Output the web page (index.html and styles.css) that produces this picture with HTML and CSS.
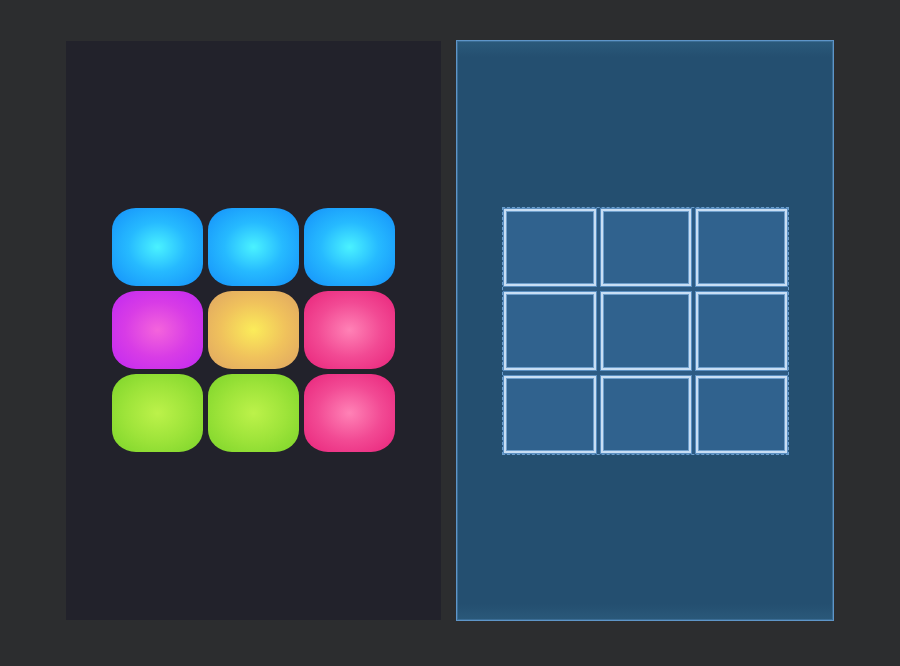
FILE: index.html
```html
<!DOCTYPE html>
<html>
<head>
<meta charset="utf-8">
<link rel="stylesheet" href="styles.css">
</head>
<body>
<div class="stage">
  <div class="panel device">
    <div class="pads">
      <div class="pad blue"></div>
      <div class="pad blue"></div>
      <div class="pad blue"></div>
      <div class="pad purple"></div>
      <div class="pad orange"></div>
      <div class="pad pink"></div>
      <div class="pad green"></div>
      <div class="pad green"></div>
      <div class="pad pink"></div>
    </div>
  </div>
  <div class="panel blueprint">
    <div class="layout">
      <div class="cell"></div>
      <div class="cell"></div>
      <div class="cell"></div>
      <div class="cell"></div>
      <div class="cell"></div>
      <div class="cell"></div>
      <div class="cell"></div>
      <div class="cell"></div>
      <div class="cell"></div>
    </div>
  </div>
</div>
</body>
</html>
```
FILE: styles.css
```css
html, body {
  margin: 0;
  padding: 0;
  background: #2c2d2f;
  font-family: "Liberation Sans", sans-serif;
}
.stage {
  width: 900px;
  height: 666px;
  display: flex;
  align-items: flex-start;
  padding: 40px 0 0 66px;
  box-sizing: border-box;
  gap: 15px;
}
.panel {
  display: flex;
  align-items: center;
  justify-content: center;
  box-sizing: border-box;
}
.device {
  width: 375px;
  height: 579px;
  background: #22222b;
  margin-top: 1px;
  padding-bottom: 2px;
}
.pads {
  display: grid;
  grid-template-columns: repeat(3, 91px);
  grid-template-rows: repeat(3, 78px);
  gap: 5px;
}
.pad {
  border-radius: 24px / 22px;
}
.blue { background: radial-gradient(ellipse at center, #4af2ff 0%, #26baff 45%, #148ffa 100%); }
.purple { background: radial-gradient(ellipse at center, #f464dc 0%, #d83ce6 50%, #c028f2 100%); }
.orange { background: radial-gradient(ellipse at center, #fbec5a 0%, #f0c25c 50%, #dea462 100%); }
.pink { background: radial-gradient(ellipse at center, #ff82b6 0%, #f24a94 50%, #e8237a 100%); }
.green { background: radial-gradient(ellipse at center, #bcf24a 0%, #9ee43a 50%, #7cd42a 100%); }

.blueprint {
  width: 378px;
  height: 581px;
  background: linear-gradient(to bottom, #2b5a7b 0px, #244f70 16px, #244f70 563px, #2b5a7b 581px);
  border: 1px solid #5e95c8;
  box-shadow: inset 0 0 0 1px #3a6c94;
}
.layout {
  display: grid;
  grid-template-columns: 92px 90px 91px;
  grid-template-rows: 77px 78px 77px;
  column-gap: 5px;
  row-gap: 6px;
  padding: 1px;
  border: 1px dashed #6a9dcc;
  background: #2c5b84;
  margin-left: 1px;
  margin-top: 1px;
}
.cell {
  background: #30628e;
  border: 2px solid #c8def4;
  box-shadow: 0 0 0 1px #5a8fc1, inset 0 0 0 1px #6f9fcc;
}
```
